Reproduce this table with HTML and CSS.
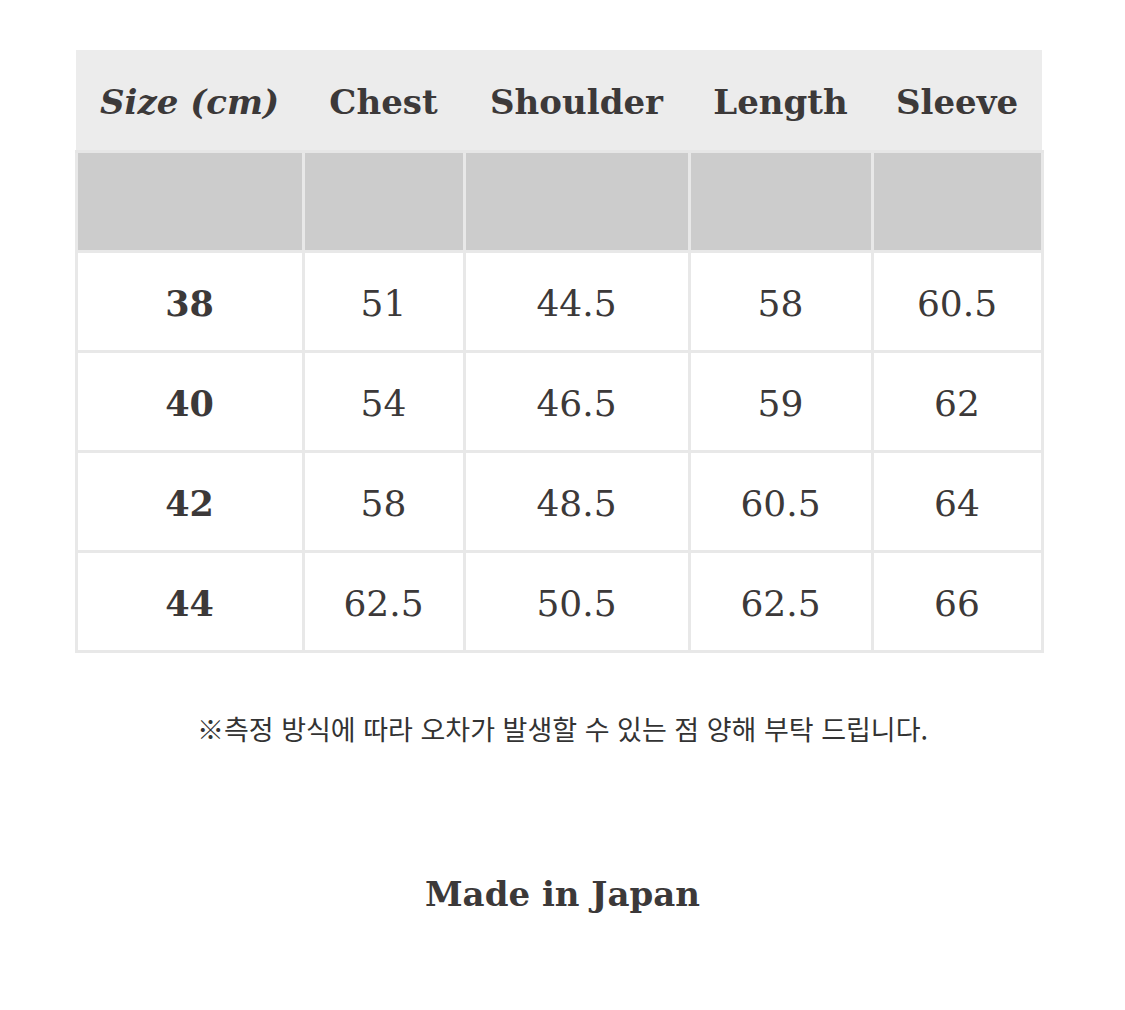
FILE: index.html
```html
<!DOCTYPE html>
<html lang="ko">
<head>
<meta charset="utf-8">
<link rel="stylesheet" href="styles.css">
</head>
<body>
<div class="page">
  <table class="size-table">
    <colgroup>
      <col class="c1"><col class="c2"><col class="c3"><col class="c4"><col class="c5">
    </colgroup>
    <thead>
      <tr class="head">
        <th class="first">Size (cm)</th>
        <th>Chest</th>
        <th>Shoulder</th>
        <th>Length</th>
        <th>Sleeve</th>
      </tr>
    </thead>
    <tbody>
      <tr class="blank"><td></td><td></td><td></td><td></td><td></td></tr>
      <tr><td class="size">38</td><td>51</td><td>44.5</td><td>58</td><td>60.5</td></tr>
      <tr><td class="size">40</td><td>54</td><td>46.5</td><td>59</td><td>62</td></tr>
      <tr><td class="size">42</td><td>58</td><td>48.5</td><td>60.5</td><td>64</td></tr>
      <tr><td class="size">44</td><td>62.5</td><td>50.5</td><td>62.5</td><td>66</td></tr>
    </tbody>
  </table>
  <p class="note">※측정 방식에 따라 오차가 발생할 수 있는 점 양해 부탁 드립니다.</p>
  <p class="origin">Made in Japan</p>
</div>
</body>
</html>
```

FILE: styles.css
```css
html, body {
  margin: 0;
  padding: 0;
  background: #ffffff;
}
.page {
  width: 1125px;
  padding-top: 50px;
  display: flex;
  flex-direction: column;
  align-items: center;
  color: #3c3939;
  font-family: "DejaVu Serif", "Liberation Serif", serif;
}
.size-table {
  width: 966px;
  margin-left: -7px;
  border-collapse: collapse;
  table-layout: fixed;
}
.c1 { width: 227px; }
.c2 { width: 161px; }
.c3 { width: 225px; }
.c4 { width: 183px; }
.c5 { width: 170px; }
.head th {
  background: #ececec;
  height: 96px;
  padding: 4px 0 0 0;
  font-size: 34px;
  font-weight: bold;
  text-align: center;
  border: 0;
  border-bottom: 3px solid #e6e6e6;
}
.head th.first {
  font-style: italic;
}
tbody td {
  height: 93px;
  padding: 4px 0 0 0;
  border: 3px solid #e8e8e8;
  text-align: center;
  font-size: 36px;
  font-weight: normal;
}
tbody td.size {
  font-weight: bold;
  font-size: 35px;
}
.blank td {
  background: #cccccc;
  padding: 0;
  height: 97px;
}
.note {
  margin: 56px 0 0 0;
  font-family: "Noto Sans CJK KR", "Noto Sans", sans-serif;
  font-size: 27px;
  color: #333333;
}
.origin {
  margin: 126px 0 0 0;
  font-size: 34px;
  font-weight: bold;
}
```
